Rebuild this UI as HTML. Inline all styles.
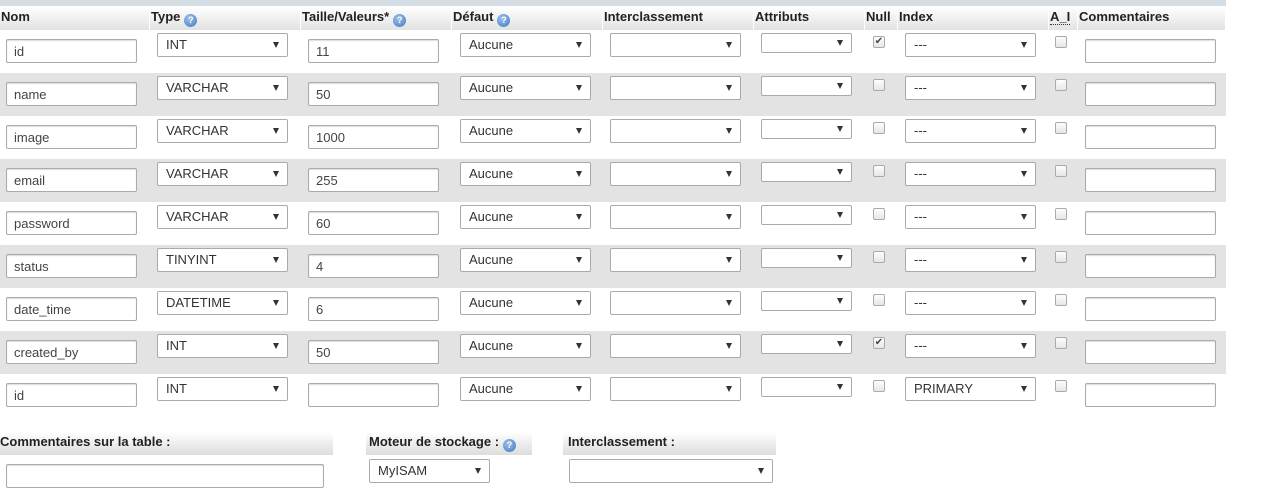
<!DOCTYPE html>
<html><head><meta charset="utf-8"><style>
*{box-sizing:border-box}
body{margin:0;width:1272px;height:490px;background:#fff;font-family:"Liberation Sans",Arial,sans-serif;font-size:13px;color:#333;position:relative;overflow:hidden}
.top{position:absolute;left:0;top:0;width:1226px;height:6px;background:#d5dde5}
.hd{position:absolute;top:6px;height:24px;background:linear-gradient(#fff,#e2e2e2);font-weight:bold;color:#222;line-height:22px;padding-left:1px;border-right:1px solid #fff}
.q{display:inline-block;width:13px;height:13px;border-radius:50%;background:radial-gradient(circle at 40% 35%,#9fc3ea,#3a78c2);color:#fff;font-size:9px;line-height:13px;text-align:center;vertical-align:-2px;margin-left:4px}
.row{position:absolute;left:0;width:1226px;height:43px}
.g{background:#e3e3e3}
.row>*{position:absolute}
.in{height:24px;top:9px;width:131px;background:#fff;border:1px solid #aaa;border-radius:2px;padding-left:7px;line-height:24px;color:#444;box-shadow:inset 0 1px 1px #ddd}
.se{height:24px;top:3px;width:131px;background:#fff;border:1px solid #aaa;border-radius:2px;padding-left:8px;line-height:22px;color:#333}
.se:after{content:"";position:absolute;right:8px;top:50%;margin-top:-3px;border-left:3px solid transparent;border-right:3px solid transparent;border-top:6px solid #333}
.cb{width:12px;height:12px;top:6px;border:1px solid #aaa;border-radius:2px;background:linear-gradient(#fdfdfd,#e6e6e6);font-size:10px;line-height:10px;text-align:center;color:#444}
.bh{position:absolute;top:432px;height:23px;background:linear-gradient(#fff,#dcdcdc);font-weight:bold;color:#222;line-height:20px}
</style></head><body>
<div class="top"></div>
<div class="hd" style="left:0;width:150px">Nom</div>
<div class="hd" style="left:150px;width:151px">Type<span class="q">?</span></div>
<div class="hd" style="left:301px;width:151px">Taille/Valeurs*<span class="q">?</span></div>
<div class="hd" style="left:452px;width:151px">Défaut<span class="q">?</span></div>
<div class="hd" style="left:603px;width:151px">Interclassement</div>
<div class="hd" style="left:754px;width:111px">Attributs</div>
<div class="hd" style="left:865px;width:33px">Null</div>
<div class="hd" style="left:898px;width:151px">Index</div>
<div class="hd" style="left:1049px;width:29px"><span style="border-bottom:1px dotted #333">A_I</span></div>
<div class="hd" style="left:1078px;width:148px">Commentaires</div>

<div class="row" style="top:30px"><div class="in" style="left:6px">id</div><div class="se" style="left:157px">INT</div><div class="in" style="left:308px">11</div><div class="se" style="left:460px">Aucune</div><div class="se" style="left:610px"></div><div class="se" style="left:761px;width:91px;height:20px"></div><div class="cb" style="left:873px">✔</div><div class="se" style="left:905px">---</div><div class="cb" style="left:1055px"></div><div class="in" style="left:1085px"></div></div>
<div class="row g" style="top:73px"><div class="in" style="left:6px">name</div><div class="se" style="left:157px">VARCHAR</div><div class="in" style="left:308px">50</div><div class="se" style="left:460px">Aucune</div><div class="se" style="left:610px"></div><div class="se" style="left:761px;width:91px;height:20px"></div><div class="cb" style="left:873px"></div><div class="se" style="left:905px">---</div><div class="cb" style="left:1055px"></div><div class="in" style="left:1085px"></div></div>
<div class="row" style="top:116px"><div class="in" style="left:6px">image</div><div class="se" style="left:157px">VARCHAR</div><div class="in" style="left:308px">1000</div><div class="se" style="left:460px">Aucune</div><div class="se" style="left:610px"></div><div class="se" style="left:761px;width:91px;height:20px"></div><div class="cb" style="left:873px"></div><div class="se" style="left:905px">---</div><div class="cb" style="left:1055px"></div><div class="in" style="left:1085px"></div></div>
<div class="row g" style="top:159px"><div class="in" style="left:6px">email</div><div class="se" style="left:157px">VARCHAR</div><div class="in" style="left:308px">255</div><div class="se" style="left:460px">Aucune</div><div class="se" style="left:610px"></div><div class="se" style="left:761px;width:91px;height:20px"></div><div class="cb" style="left:873px"></div><div class="se" style="left:905px">---</div><div class="cb" style="left:1055px"></div><div class="in" style="left:1085px"></div></div>
<div class="row" style="top:202px"><div class="in" style="left:6px">password</div><div class="se" style="left:157px">VARCHAR</div><div class="in" style="left:308px">60</div><div class="se" style="left:460px">Aucune</div><div class="se" style="left:610px"></div><div class="se" style="left:761px;width:91px;height:20px"></div><div class="cb" style="left:873px"></div><div class="se" style="left:905px">---</div><div class="cb" style="left:1055px"></div><div class="in" style="left:1085px"></div></div>
<div class="row g" style="top:245px"><div class="in" style="left:6px">status</div><div class="se" style="left:157px">TINYINT</div><div class="in" style="left:308px">4</div><div class="se" style="left:460px">Aucune</div><div class="se" style="left:610px"></div><div class="se" style="left:761px;width:91px;height:20px"></div><div class="cb" style="left:873px"></div><div class="se" style="left:905px">---</div><div class="cb" style="left:1055px"></div><div class="in" style="left:1085px"></div></div>
<div class="row" style="top:288px"><div class="in" style="left:6px">date_time</div><div class="se" style="left:157px">DATETIME</div><div class="in" style="left:308px">6</div><div class="se" style="left:460px">Aucune</div><div class="se" style="left:610px"></div><div class="se" style="left:761px;width:91px;height:20px"></div><div class="cb" style="left:873px"></div><div class="se" style="left:905px">---</div><div class="cb" style="left:1055px"></div><div class="in" style="left:1085px"></div></div>
<div class="row g" style="top:331px"><div class="in" style="left:6px">created_by</div><div class="se" style="left:157px">INT</div><div class="in" style="left:308px">50</div><div class="se" style="left:460px">Aucune</div><div class="se" style="left:610px"></div><div class="se" style="left:761px;width:91px;height:20px"></div><div class="cb" style="left:873px">✔</div><div class="se" style="left:905px">---</div><div class="cb" style="left:1055px"></div><div class="in" style="left:1085px"></div></div>
<div class="row" style="top:374px"><div class="in" style="left:6px">id</div><div class="se" style="left:157px">INT</div><div class="in" style="left:308px"></div><div class="se" style="left:460px">Aucune</div><div class="se" style="left:610px"></div><div class="se" style="left:761px;width:91px;height:20px"></div><div class="cb" style="left:873px"></div><div class="se" style="left:905px">PRIMARY</div><div class="cb" style="left:1055px"></div><div class="in" style="left:1085px"></div></div>

<div class="bh" style="left:0;width:333px">Commentaires sur la table :</div>
<div class="bh" style="left:366px;width:166px;padding-left:3px">Moteur de stockage :<span class="q">?</span></div>
<div class="bh" style="left:563px;width:213px;padding-left:5px">Interclassement :</div>
<div class="in" style="position:absolute;left:6px;top:464px;width:318px"></div>
<div class="se" style="position:absolute;left:369px;top:459px;width:121px">MyISAM</div>
<div class="se" style="position:absolute;left:569px;top:459px;width:204px"></div>
</body></html>
